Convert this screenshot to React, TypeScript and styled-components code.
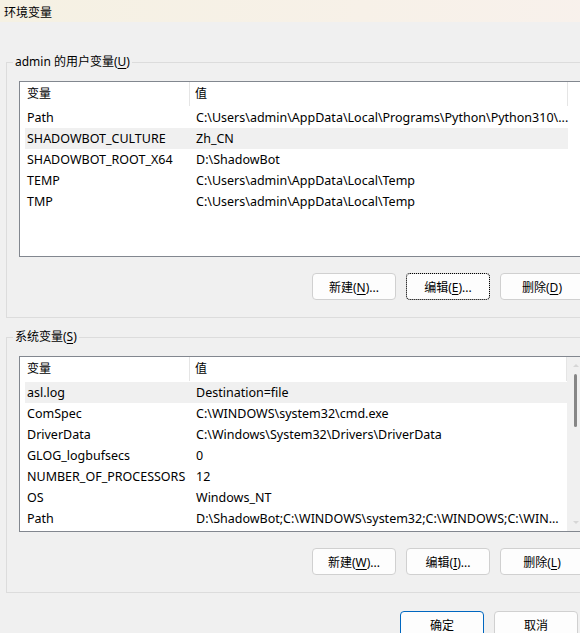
import React from 'react'
import styled, { createGlobalStyle } from 'styled-components'

type EnvVar = [string, string]

const userVars: EnvVar[] = [
  ['Path', 'C:\\Users\\admin\\AppData\\Local\\Programs\\Python\\Python310\\...'],
  ['SHADOWBOT_CULTURE', 'Zh_CN'],
  ['SHADOWBOT_ROOT_X64', 'D:\\ShadowBot'],
  ['TEMP', 'C:\\Users\\admin\\AppData\\Local\\Temp'],
  ['TMP', 'C:\\Users\\admin\\AppData\\Local\\Temp'],
]

const systemVars: EnvVar[] = [
  ['asl.log', 'Destination=file'],
  ['ComSpec', 'C:\\WINDOWS\\system32\\cmd.exe'],
  ['DriverData', 'C:\\Windows\\System32\\Drivers\\DriverData'],
  ['GLOG_logbufsecs', '0'],
  ['NUMBER_OF_PROCESSORS', '12'],
  ['OS', 'Windows_NT'],
  ['Path', 'D:\\ShadowBot;C:\\WINDOWS\\system32;C:\\WINDOWS;C:\\WIN...'],
]

const GlobalStyle = createGlobalStyle`
  html, body {
    margin: 0;
    background: #f0f0f0;
    overflow: hidden;
  }
  body {
    font-family: "Noto Sans", "Noto Sans CJK SC", sans-serif;
    font-size: 12px;
    color: #000;
  }
`

const Window = styled.div`
  width: 606px;
  height: 633px;
  display: flex;
  flex-direction: column;
`

const TitleBar = styled.div`
  height: 29px;
  padding: 4px 0 0 4px;
  box-sizing: border-box;
  background: linear-gradient(90deg, #f5f1e3 0%, #f7f1e8 60%, #f8f1ec 100%);
  font-size: 12px;
  line-height: 18px;
`

const Body = styled.div`
  padding: 32px 0 0 6px;
  display: flex;
  flex-direction: column;
`

const GroupBox = styled.fieldset<{ $gapTop?: number }>`
  width: 592px;
  box-sizing: border-box;
  margin: ${p => p.$gapTop ?? 0}px 0 0 0;
  padding: 0;
  border: 1px solid #dcdcdc;
  min-width: 0;
`

const Legend = styled.legend`
  margin-left: 6px;
  padding: 0 2px;
  line-height: 16px;
`

const GroupInner = styled.div`
  padding: 11px 12px 17px 12px;
`

const Key = styled.span`
  text-decoration: underline;
  text-underline-offset: 2px;
`

const ListBox = styled.div`
  height: 174px;
  border: 1px solid #82878f;
  background: #fff;
  display: flex;
  overflow: hidden;
`

const ListBody = styled.div`
  width: 543px;
  padding-left: 5px;
  display: flex;
  flex-direction: column;
`

const HeaderRow = styled.div`
  display: flex;
  height: 25px;
  line-height: 24px;
`

const HeaderCell = styled.div<{ $first?: boolean }>`
  box-sizing: border-box;
  ${p => (p.$first ? 'width: 165px; padding-left: 2px;' : 'flex: 1; padding-left: 5px;')}
  border-right: 1px solid #e5e5e5;
  margin-bottom: 1px;
`

const Row = styled.div<{ $selected?: boolean }>`
  display: flex;
  height: 21px;
  line-height: 21px;
  font-size: 12.5px;
  background: ${p => (p.$selected ? '#f0f0f0' : 'transparent')};
  white-space: nowrap;
`

const NameCell = styled.div`
  width: 165px;
  flex-shrink: 0;
  padding-left: 2px;
  box-sizing: border-box;
  overflow: hidden;
`

const ValueCell = styled.div`
  flex: 1;
  padding-left: 6px;
`

const ScrollGutter = styled.div`
  width: 17px;
  flex-shrink: 0;
`

const ScrollBar = styled.div`
  width: 17px;
  flex-shrink: 0;
  background: #f0f0f0;
  display: flex;
  flex-direction: column;
  align-items: center;
`

const Arrow = styled.div<{ $down?: boolean }>`
  height: 17px;
  width: 100%;
  display: flex;
  align-items: center;
  justify-content: center;
  &::after {
    content: '';
    border-left: 3px solid transparent;
    border-right: 3px solid transparent;
    ${p => (p.$down ? 'border-top' : 'border-bottom')}: 3px solid #d6d6d6;
  }
`

const Thumb = styled.div`
  width: 3px;
  height: 53px;
  border-radius: 2px;
  background: #868686;
`

const Spacer = styled.div`
  flex: 1;
`

const ButtonRow = styled.div`
  display: flex;
  justify-content: flex-end;
  gap: 10px;
  margin-top: 16px;
  padding-right: 1px;
`

const Button = styled.button<{ $focused?: boolean; $primary?: boolean }>`
  width: 84px;
  height: 27px;
  box-sizing: border-box;
  border-radius: 4px;
  border: 1px solid ${p => (p.$primary ? '#0067c0' : '#d0d0d0')};
  background: #fdfdfd;
  font-family: inherit;
  font-size: 12px;
  color: #000;
  padding: 0;
  ${p => (p.$focused ? 'outline: 1px dotted #000; outline-offset: -1px;' : '')}
`

const Footer = styled.div`
  display: flex;
  justify-content: flex-end;
  gap: 10px;
  margin-top: 18px;
  padding-right: 28px;
`

function VarList({ vars, selected, scroll }: { vars: EnvVar[]; selected: number; scroll?: boolean }) {
  return (
    <ListBox>
      <ListBody>
        <HeaderRow>
          <HeaderCell $first>变量</HeaderCell>
          <HeaderCell>值</HeaderCell>
        </HeaderRow>
        {vars.map(([name, value], i) => (
          <Row key={name + i} $selected={i === selected}>
            <NameCell>{name}</NameCell>
            <ValueCell>{value}</ValueCell>
          </Row>
        ))}
      </ListBody>
      {scroll ? (
        <ScrollBar>
          <Arrow />
          <Thumb />
          <Spacer />
          <Arrow $down />
        </ScrollBar>
      ) : (
        <ScrollGutter />
      )}
    </ListBox>
  )
}

export default function App() {
  return (
    <>
      <GlobalStyle />
      <Window>
        <TitleBar>环境变量</TitleBar>
        <Body>
          <GroupBox>
            <Legend>
              admin 的用户变量(<Key>U</Key>)
            </Legend>
            <GroupInner>
              <VarList vars={userVars} selected={1} />
              <ButtonRow>
                <Button>新建(<Key>N</Key>)...</Button>
                <Button $focused>编辑(<Key>E</Key>)...</Button>
                <Button>删除(<Key>D</Key>)</Button>
              </ButtonRow>
            </GroupInner>
          </GroupBox>
          <GroupBox $gapTop={11}>
            <Legend>
              系统变量(<Key>S</Key>)
            </Legend>
            <GroupInner>
              <VarList vars={systemVars} selected={0} scroll />
              <ButtonRow>
                <Button>新建(<Key>W</Key>)...</Button>
                <Button>编辑(<Key>I</Key>)...</Button>
                <Button>删除(<Key>L</Key>)</Button>
              </ButtonRow>
            </GroupInner>
          </GroupBox>
        </Body>
        <Footer>
          <Button $primary>确定</Button>
          <Button>取消</Button>
        </Footer>
      </Window>
    </>
  )
}
